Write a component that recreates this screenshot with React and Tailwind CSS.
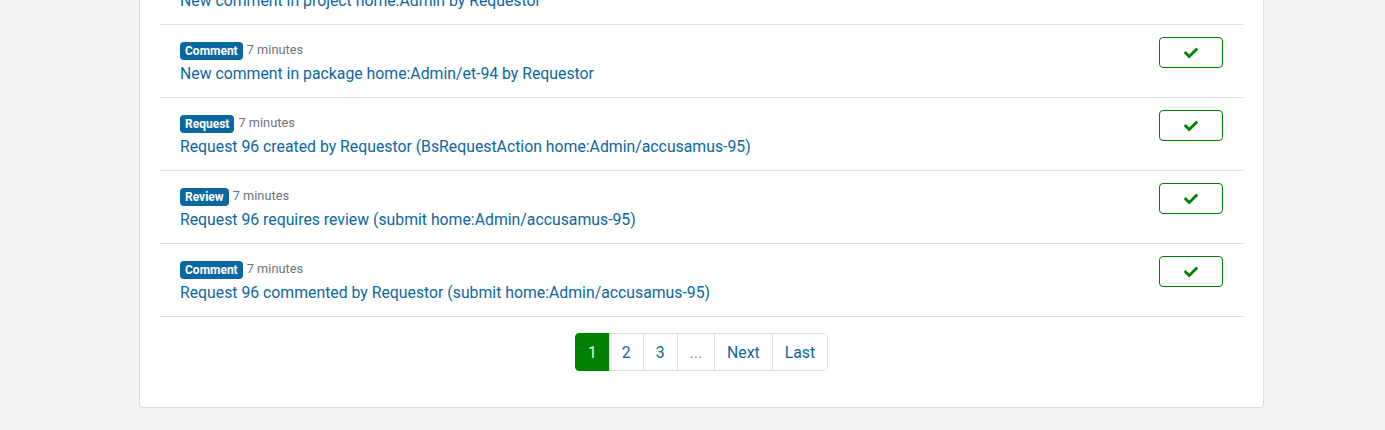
const notifications = [
  { kind: "Comment", text: "New comment in project home:Admin by Requestor" },
  { kind: "Comment", text: "New comment in package home:Admin/et-94 by Requestor" },
  { kind: "Request", text: "Request 96 created by Requestor (BsRequestAction home:Admin/accusamus-95)" },
  { kind: "Review", text: "Request 96 requires review (submit home:Admin/accusamus-95)" },
  { kind: "Comment", text: "Request 96 commented by Requestor (submit home:Admin/accusamus-95)" },
];

const CheckIcon = () => (
  <svg width="14" height="14" viewBox="0 0 512 512" fill="currentColor">
    <path d="M173.9 439.4l-166.4-166.4c-10-10-10-26.2 0-36.2l36.2-36.2c10-10 26.2-10 36.2 0L192 312.7 432.1 72.6c10-10 26.2-10 36.2 0l36.2 36.2c10 10 10 26.2 0 36.2L210.1 439.4c-10 10-26.2 10-36.2 0z" />
  </svg>
);

const NotificationRow = ({ item }) => {
  return (
    <div className="flex items-start justify-between border-b border-[#dee2e6] px-5 pt-3 pb-[11px]">
      <div>
        <div className="flex h-6 items-end pb-[1px]">
          <span className="rounded-[4px] bg-[#0b679f] px-[5px] text-[12px] font-bold leading-[18px] text-white">
            {item.kind}
          </span>
          <span className="ml-1 self-center pt-[3px] text-[12.8px] text-[#6c757d]">7 minutes</span>
        </div>
        <a href="#" className="block pt-px text-[15.8px] leading-6 text-[#0b679f]">
          {item.text}
        </a>
      </div>
      <button className="flex h-[31px] w-16 items-center justify-center rounded-[4px] border border-[#008000] bg-white text-[#008000]">
        <CheckIcon />
      </button>
    </div>
  );
};

const PageItem = ({ label, active, muted, first, last }) => (
  <span
    className={`-ml-px block border px-3 pt-[7px] pb-[5px] text-[15.8px] leading-6 ${
      active
        ? "border-[#008000] bg-[#008000] text-[#e8f3e8]"
        : muted
        ? "border-[#dee2e6] bg-white text-[#8a9199]"
        : "border-[#dee2e6] bg-white text-[#0b679f]"
    } ${first ? "ml-0 rounded-l-[4px]" : ""} ${last ? "rounded-r-[4px]" : ""}`}
  >
    {label}
  </span>
);

export default function App() {
  return (
    <div className="h-[430px] overflow-hidden bg-[#f5f5f5] font-['Roboto',sans-serif]">
      <div className="-mt-[48px] ml-[139px] w-[1125px] rounded-b-[4px] border-x border-b border-[#dcdcdc] bg-white px-5 pb-5">
        {notifications.map((n, i) => (
          <NotificationRow key={i} item={n} />
        ))}
        <div className="mt-4 mb-4 flex justify-center">
          <PageItem label="1" active first />
          <PageItem label="2" />
          <PageItem label="3" />
          <PageItem label="..." muted />
          <PageItem label="Next" />
          <PageItem label="Last" last />
        </div>
      </div>
    </div>
  );
}
